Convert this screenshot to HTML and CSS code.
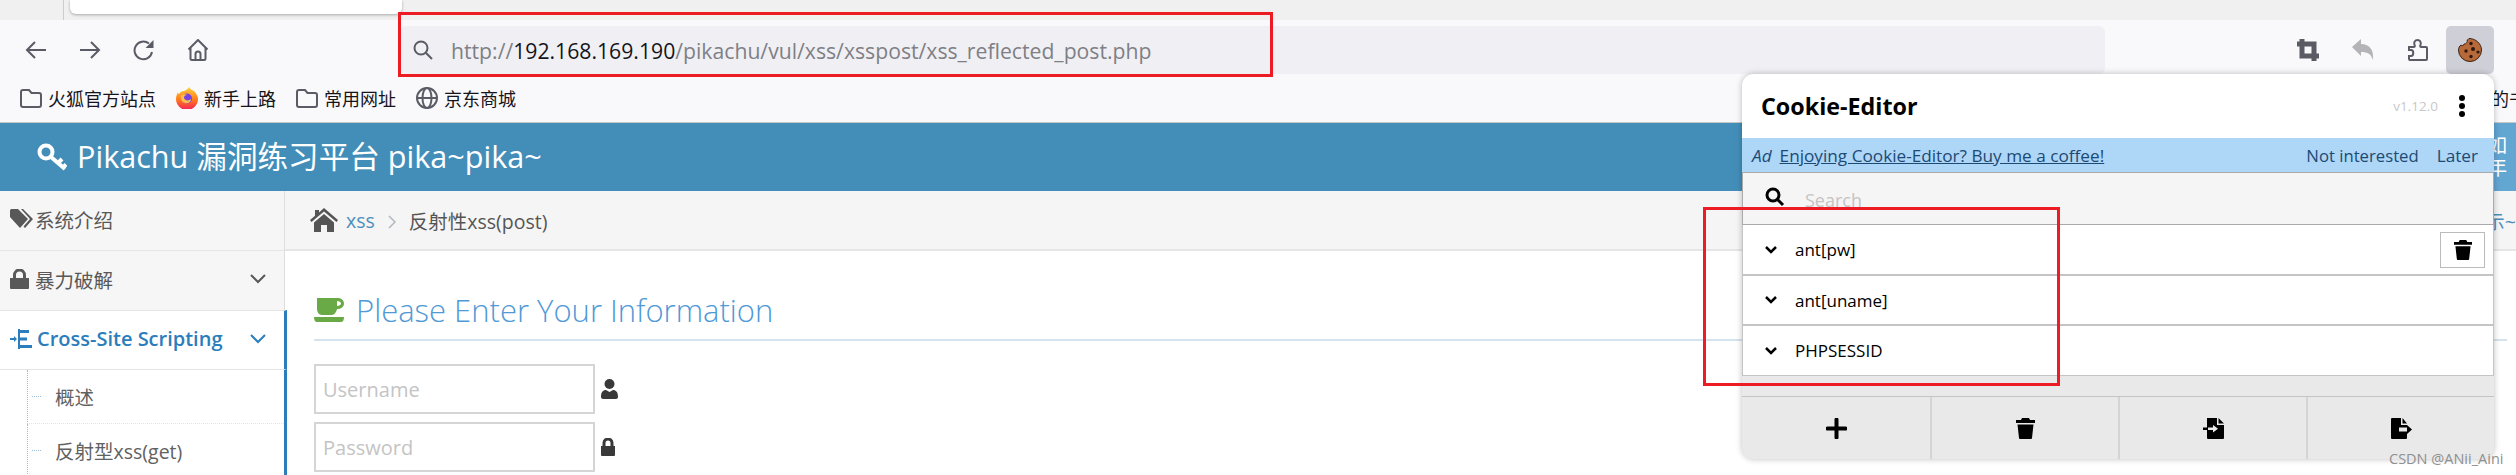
FILE: index.html
```html
<!DOCTYPE html>
<html lang="zh-CN">
<head>
    <meta charset="UTF-8">
    <title>Pikachu 漏洞练习平台</title>
    <link rel="stylesheet" href="styles.css">
</head>
<body>
    <div class="tabstrip">
        <div class="tab-line"></div>
        <div class="tab"></div>
    </div>

    <div class="toolbar">
        <div class="nav-btns">
            <svg class="tb-icon" viewBox="0 0 22 22"><path d="M21 11H2M10 3l-8 8 8 8"/></svg>
            <svg class="tb-icon" viewBox="0 0 22 22"><path d="M1 11h19M12 3l8 8-8 8"/></svg>
            <svg class="tb-icon" viewBox="0 0 22 22"><path d="M19 13a8.800 8.800 0 1 1-3-8.400"/><path class="solid" d="M20.500 1v8h-8z"/></svg>
            <svg class="tb-icon" viewBox="0 0 22 22"><path d="M1.500 10.500 11 1l9.500 9.500M3.500 9v10.500a1.500 1.500 0 0 0 1.500 1.500h12a1.500 1.500 0 0 0 1.500-1.500V9M8.500 21v-6a2.500 2.500 0 0 1 5 0v6"/></svg>
        </div>
        <div class="urlbar">
            <svg class="url-search" viewBox="0 0 20 20"><circle cx="8" cy="8" r="6.500"/><path d="M12.800 12.800 19 19"/></svg>
            <span class="url-text">http://<b>192.168.169.190</b>/pikachu/vul/xss/xsspost/xss_reflected_post.php</span>
        </div>
        <div class="tb-right">
            <svg class="tb-icon crop" viewBox="0 0 22 22"><path d="M5 0v17h17M0 5h17v17"/></svg>
            <svg class="tb-icon undo" viewBox="0 0 22 22"><path d="M0 8 9 0v5c8 0 13 5 12 16-2-6-5-8-12-8v4z"/></svg>
            <svg class="tb-icon" viewBox="0 0 22 22"><path d="M2 8h5c1 0 1-1 .500-2C6.500 3.500 8 1 10.500 1S14.500 3.500 13.500 6c-.500 1-.500 2 .500 2h5a1 1 0 0 1 1 1v11a1 1 0 0 1-1 1H3a1 1 0 0 1-1-1v-3h2c3 0 3-6 0-6H2z"/></svg>
            <div class="cookie-btn">
                <svg class="cookie" viewBox="0 0 24 24">
                    <path class="c-body" d="M11 .5C17.500 .5 23.500 5.500 23.500 12a11.500 11.500 0 0 1-23 0C.5 10 1.500 8 3 7c1 1 3 1 3-1 2 0 4-2 3-4 1 0 2-1.500 2-1.500z"/>
                    <circle cx="13" cy="5.500" r="1.700"/><circle cx="8" cy="13" r="1.700"/><circle cx="15" cy="11" r="2"/><circle cx="13" cy="18.500" r="1.700"/><circle cx="20" cy="14" r="1.600"/>
                </svg>
            </div>
        </div>
    </div>

    <div class="bookmarks">
        <svg class="bm-icon" viewBox="0 0 22 22"><path d="M3 3h6l2.500 3H19a2 2 0 0 1 2 2v10a2 2 0 0 1-2 2H3a2 2 0 0 1-2-2V5a2 2 0 0 1 2-2z"/></svg>
        <span class="bm-text">火狐官方站点</span>
        <svg class="bm-fox" viewBox="0 0 22 22">
            <defs><linearGradient id="fox" x1="0" y1="0" x2="0" y2="1"><stop offset="0" stop-color="#ffd53a"/><stop offset=".55" stop-color="#ff7a1c"/><stop offset="1" stop-color="#f5215c"/></linearGradient></defs>
            <path fill="url(#fox)" d="M13 0c1 2 3 3 5 4 3 3 4 6 4 8a11 11 0 0 1-22 0c0-3 1-5 2-7 0 1 .500 2 1 2 1-2 3-3 5-3 2-1 4-2 5-4z"/>
            <circle cx="11" cy="11.500" r="5" fill="#7542e5"/>
            <path fill="#ffbd4f" d="M5 9c2-2 5-2 6-1-2 0-3 1-3 3 1 3 5 3 7 1 0 3-3 5-6 4-3-1-5-4-4-7z"/>
        </svg>
        <span class="bm-text">新手上路</span>
        <svg class="bm-icon" viewBox="0 0 22 22"><path d="M3 3h6l2.500 3H19a2 2 0 0 1 2 2v10a2 2 0 0 1-2 2H3a2 2 0 0 1-2-2V5a2 2 0 0 1 2-2z"/></svg>
        <span class="bm-text">常用网址</span>
        <svg class="bm-icon" viewBox="0 0 22 22"><circle cx="11" cy="11" r="10"/><ellipse cx="11" cy="11" rx="4.500" ry="10"/><path d="M1 11h20"/></svg>
        <span class="bm-text">京东商城</span>
        <span class="bm-more">的书签</span>
    </div>

    <div class="navbar">
        <svg class="key" viewBox="0 0 30 28"><circle cx="9" cy="9" r="6.500"/><path d="M14 14 28 26M21 20l4-4M26 24.500l3-3"/></svg>
        <span class="brand">Pikachu 漏洞练习平台 pika~pika~</span>
        <div class="nav-user">如<br>年</div>
    </div>

    <div class="main">
        <div class="sidebar">
            <div class="side-item first">
                <svg class="side-icon tag" viewBox="0 0 24 20"><path d="M0 1.500A1.500 1.500 0 0 1 1.500 0H8l10 10-8 9L0 8z"/><path d="M11 0h2l10 10-8 9-1.500-1.500L20 10z"/></svg>
                <span>系统介绍</span>
            </div>
            <div class="side-item">
                <svg class="side-icon lock" viewBox="0 0 19 20"><path d="M0 9h19v10a1 1 0 0 1-1 1H1a1 1 0 0 1-1-1z"/><path class="arc" d="M4.500 10V6a5 5 0 0 1 10 0v4"/></svg>
                <span class="side-label">暴力破解</span>
                <svg class="chev" viewBox="0 0 16 10"><path d="M1 1l7 7 7-7"/></svg>
            </div>
            <div class="side-item active">
                <svg class="side-icon tree" viewBox="0 0 22 20"><path d="M0 9h5v2H0zM4 7l3 3-3 3zM8 0h2v20H8zM10 1h9v3h-9zM10 8.500h7v3h-7zM10 16h12v3H10z"/></svg>
                <span class="side-label">Cross-Site Scripting</span>
                <svg class="chev" viewBox="0 0 16 10"><path d="M1 1l7 7 7-7"/></svg>
            </div>
            <div class="submenu">
                <div class="sub-item"><span class="sub-tick"></span>概述</div>
                <div class="sub-item"><span class="sub-tick"></span>反射型xss(get)</div>
            </div>
        </div>

        <div class="content">
            <div class="crumbs">
                <svg class="home" viewBox="0 0 28 24"><path d="M14 0 28 12l-1.500 2L14 3.500 1.500 14 0 12 5 7.800V2h4v2.400z"/><path d="M14 6l10 8.500V24h-7v-7h-6v7H4v-9.500z"/></svg>
                <a class="crumb-link">xss</a>
                <svg class="crumb-sep" viewBox="0 0 8 14"><path d="M1 1l6 6-6 6"/></svg>
                <span class="crumb-now">反射性xss(post)</span>
                <span class="crumb-more">提示~</span>
            </div>
            <div class="form-area">
                <div class="form-head">
                    <svg class="coffee" viewBox="0 0 30 24"><path d="M3 0h20c4 0 7 2 7 5.500S27 11 23 11c-.500 3-3 6-5 6H8c-3 0-5-3-5-6z"/><path class="hole" d="M23 3v5c2 0 4-1 4-2.500S25 3 23 3z"/><path d="M0 19h30c0 3-1 5-3 5H3c-2 0-3-2-3-5z"/></svg>
                    <span>Please Enter Your Information</span>
                </div>
                <div class="field">
                    <input class="txt" type="text" placeholder="Username">
                    <svg class="f-icon" viewBox="0 0 17 20"><circle cx="8.500" cy="5" r="5"/><path d="M0 18c0-5 2-7 5-7l3.500 2 3.500-2c3 0 5 2 5 7 0 1-1 2-2 2H2c-1 0-2-1-2-2z"/></svg>
                </div>
                <div class="field">
                    <input class="txt" type="password" placeholder="Password">
                    <svg class="f-icon pw" viewBox="0 0 14 18"><path d="M0 8h14v9a1 1 0 0 1-1 1H1a1 1 0 0 1-1-1z"/><path class="arc" d="M3 9V5a4 4 0 0 1 8 0v4"/></svg>
                </div>
            </div>
        </div>
    </div>

    <!-- popup de la extension -->
    <div class="popup">
        <div class="pop-head">
            <span class="pop-title">Cookie-Editor</span>
            <span class="pop-ver">v1.12.0</span>
            <svg class="pop-dots" viewBox="0 0 6 22"><circle cx="3" cy="3" r="3"/><circle cx="3" cy="11" r="3"/><circle cx="3" cy="19" r="3"/></svg>
        </div>
        <div class="pop-ad">
            <i>Ad</i>
            <a class="ad-link">Enjoying Cookie-Editor? Buy me a coffee!</a>
            <span class="ad-no">Not interested</span>
            <span>Later</span>
        </div>
        <div class="pop-search">
            <svg class="pop-mag" viewBox="0 0 20 20"><circle cx="8" cy="8" r="6"/><path d="M12.500 12.500 18 18"/></svg>
            <span>Search</span>
        </div>
        <div class="cookie-row first">
            <svg class="row-chev" viewBox="0 0 12 8"><path d="M1 1l5 5 5-5"/></svg>
            <span>ant[pw]</span>
            <div class="row-del">
                <svg class="trash" viewBox="0 0 19 21"><path d="M6 0h7l1 2h5v3H0V2h5zM1.500 6.500h16L16 20a1 1 0 0 1-1 1H4a1 1 0 0 1-1-1z"/></svg>
            </div>
        </div>
        <div class="cookie-row">
            <svg class="row-chev" viewBox="0 0 12 8"><path d="M1 1l5 5 5-5"/></svg>
            <span>ant[uname]</span>
        </div>
        <div class="cookie-row last">
            <svg class="row-chev" viewBox="0 0 12 8"><path d="M1 1l5 5 5-5"/></svg>
            <span>PHPSESSID</span>
        </div>
        <div class="pop-foot">
            <div class="foot-btn"><svg class="foot-icon" viewBox="0 0 21 21"><path d="M8.500 1.500a2 2 0 0 1 4 0v7h7a2 2 0 0 1 0 4h-7v7a2 2 0 0 1-4 0v-7h-7a2 2 0 0 1 0-4h7z"/></svg></div>
            <div class="foot-btn"><svg class="foot-icon" viewBox="0 0 19 21"><path d="M6 0h7l1 2h5v3H0V2h5zM1.500 6.500h16L16 20a1 1 0 0 1-1 1H4a1 1 0 0 1-1-1z"/></svg></div>
            <div class="foot-btn"><svg class="foot-icon" viewBox="0 0 21 21"><path d="M4 0h10v7h7v13a1 1 0 0 1-1 1H5a1 1 0 0 1-1-1z"/><path d="M15.500 0 21 5.500h-5.500zM0 9.500h5v2.500H0z"/><path class="cut" d="M5 9.500h5V7l5 3.700-5 3.800V12H5z"/></svg></div>
            <div class="foot-btn"><svg class="foot-icon" viewBox="0 0 21 21"><path d="M0 1a1 1 0 0 1 1-1h9v7h6v13a1 1 0 0 1-1 1H1a1 1 0 0 1-1-1z"/><path d="M11.500 0 16 5.500h-4.500zM16 7l5 4.500-5 4.500z"/><path class="cut" d="M8 9.500h8v4H8z"/></svg></div>
        </div>
    </div>

    <div class="mark mark-url"></div>
    <div class="mark mark-list"></div>
    <div class="watermark">CSDN @ANii_Aini</div>
</body>
</html>
```

FILE: styles.css
```css
* {
    box-sizing: border-box;
}

html, body {
    margin: 0;
    height: 475px;
    overflow: hidden;
}

body {
    position: relative;
    background-color: #ffffff;
    font-family: "Open Sans", "Noto Sans CJK SC", sans-serif;
    color: #555555;
}

svg {
    display: block;
    flex-shrink: 0;
}

/* --- BARIS TAB --- */
.tabstrip {
    height: 20px;
    background-color: #f0f0f0;
    display: flex;
    padding-left: 63px;
}

.tab-line {
    width: 1px;
    background-color: #cccccc;
}

.tab {
    width: 332px;
    height: 14px;
    margin-left: 6px;
    background-color: #ffffff;
    border-radius: 0 0 6px 6px;
    box-shadow: 0 1px 3px rgba(0, 0, 0, 0.3);
}

/* --- TOOLBAR --- */
.toolbar {
    height: 54px;
    padding-top: 6px;
    background-color: #f9f9fb;
    display: flex;
}

.nav-btns {
    width: 400px;
    display: flex;
    align-items: center;
    gap: 32px;
    padding-left: 25px;
}

.tb-icon {
    width: 22px;
    height: 22px;
    fill: none;
    stroke: #5b5b66;
    stroke-width: 2;
}

.tb-icon .solid {
    fill: #5b5b66;
    stroke: none;
}

.urlbar {
    width: 1705px;
    height: 48px;
    background-color: #f0f0f4;
    border-radius: 6px;
    display: flex;
    align-items: center;
    padding-left: 13px;
}

.url-search {
    width: 20px;
    height: 20px;
    fill: none;
    stroke: #5b5b66;
    stroke-width: 2;
}

.url-text {
    margin-left: 18px;
    font-size: 21.200px;
    color: #7f7f86;
    white-space: nowrap;
}

.url-text b {
    font-weight: 400;
    color: #15141a;
}

.tb-right {
    flex: 1;
    display: flex;
    align-items: center;
    padding-left: 192px;
    gap: 33px;
    height: 48px;
}

.tb-icon.crop {
    stroke-width: 5;
}

.tb-icon.undo {
    fill: #b4b4b8;
    stroke: none;
}

.cookie-btn {
    width: 48px;
    height: 48px;
    margin-left: -16px;
    flex-shrink: 0;
    background-color: #cfcfd8;
    border-radius: 5px;
    display: flex;
    align-items: center;
    justify-content: center;
}

.cookie {
    width: 24px;
    height: 24px;
    fill: #2b1a10;
}

.c-body {
    fill: #b8693a;
    stroke: #3a2414;
    stroke-width: 1;
}

/* --- BOOKMARK --- */
.bookmarks {
    height: 49px;
    background-color: #f9f9fb;
    border-bottom: 1px solid #c8c8c8;
    display: flex;
    align-items: center;
    padding-left: 20px;
    font-family: "Noto Sans CJK SC", sans-serif;
    font-size: 18px;
    color: #15141a;
}

.bm-icon {
    width: 22px;
    height: 22px;
    fill: none;
    stroke: #5b5b66;
    stroke-width: 2;
}

.bm-fox {
    width: 22px;
    height: 22px;
}

.bm-text {
    margin-left: 6px;
    margin-right: 20px;
}

.bm-more {
    margin-left: auto;
    width: 25px;
    overflow: hidden;
    white-space: nowrap;
}

/* --- HEADER BIRU --- */
.navbar {
    height: 68px;
    background-color: #438eb9;
    display: flex;
    align-items: center;
    padding-left: 37px;
    color: #ffffff;
}

.key {
    width: 30px;
    height: 28px;
    fill: none;
    stroke: #ffffff;
    stroke-width: 4;
}

.brand {
    margin: 0 0 5px 10px;
    font-size: 30.600px;
    white-space: nowrap;
}

.nav-user {
    margin-left: auto;
    width: 40px;
    height: 68px;
    padding: 12px 9px 0 0;
    background-color: #62a6d2;
    text-align: right;
    font-size: 20px;
    line-height: 22px;
}

/* --- ISI HALAMAN --- */
.main {
    display: flex;
    height: 284px;
}

.sidebar {
    width: 285px;
    flex-shrink: 0;
    background-color: #f6f6f6;
    border-right: 1px solid #dddddd;
    position: relative;
}

.side-item {
    height: 60px;
    display: flex;
    align-items: center;
    padding: 0 18px 3px 10px;
    font-size: 19.500px;
    color: #585858;
    border-top: 1px solid #e5e5e5;
}

.side-item.first {
    height: 59px;
    border-top: none;
}

.side-label {
    flex: 1;
    margin-left: 6px;
}

.side-icon {
    fill: #585858;
}

.tag {
    width: 24px;
    height: 20px;
    margin-right: 1px;
}

.lock {
    width: 19px;
    height: 20px;
}

.arc {
    fill: none;
    stroke: #585858;
    stroke-width: 3;
}

.chev {
    width: 16px;
    height: 10px;
    fill: none;
    stroke: #585858;
    stroke-width: 2;
}

.side-item.active {
    height: 60px;
    margin-right: -3px;
    border-right: 3px solid #2b7dbc;
    background-color: #ffffff;
    color: #2b7dbc;
    font-size: 20px;
    font-weight: 600;
    border-bottom: 1px solid #e5e5e5;
}

.active .chev {
    stroke: #2b7dbc;
}

.active .side-label {
    margin-left: 5px;
}

.tree {
    width: 22px;
    height: 20px;
    fill: #2b7dbc;
}

.submenu {
    background-color: #ffffff;
    margin-right: -3px;
    border-right: 3px solid #2b7dbc;
    height: 106px;
}

.sub-item {
    height: 54px;
    display: flex;
    align-items: center;
    margin-left: 27px;
    border-left: 1px dotted #9dbdd6;
    border-bottom: 1px dotted #e4e4e4;
    font-size: 19.500px;
    color: #616161;
}

.sub-tick {
    width: 9px;
    border-top: 1px dotted #9dbdd6;
    margin: 0 14px 0 4px;
}

.content {
    flex: 1;
    min-width: 0;
}

.crumbs {
    height: 60px;
    background-color: #f5f5f5;
    border-bottom: 2px solid #e5e5e5;
    display: flex;
    align-items: center;
    padding-left: 25px;
    font-size: 19.500px;
}

.home {
    width: 28px;
    height: 24px;
    fill: #555555;
}

.crumb-link {
    margin-left: 8px;
    color: #4c8fbd;
}

.crumb-sep {
    width: 8px;
    height: 14px;
    margin: 3px 13px 0;
    fill: none;
    stroke: #b2b6bf;
    stroke-width: 1.500;
}

.crumb-now {
    color: #555555;
}

.crumb-more {
    margin-left: auto;
    color: #4c8fbd;
    white-space: nowrap;
}

.form-area {
    padding: 44px 9px 0 30px;
}

.form-head {
    display: flex;
    align-items: center;
    gap: 12px;
    height: 46px;
    margin-left: -1px;
    border-bottom: 2px solid #d5e3ef;
    padding-bottom: 14px;
    font-size: 31px;
    font-weight: 300;
    color: #4f99d6;
    white-space: nowrap;
}

.coffee {
    width: 30px;
    height: 24px;
    fill: #69aa46;
}

.coffee .hole {
    fill: #ffffff;
}

.field {
    display: flex;
    align-items: center;
    gap: 6px;
    margin-top: 8px;
    margin-left: -1px;
}

.form-head + .field {
    margin-top: 23px;
}

.txt {
    width: 281px;
    height: 50px;
    padding: 0 7px;
    border: 2px solid #d5d5d5;
    background-color: #ffffff;
    font-family: inherit;
    font-size: 20px;
    outline: none;
}

.txt::placeholder {
    color: #c4c4c4;
}

.f-icon {
    width: 17px;
    height: 20px;
    fill: #393939;
}

.f-icon.pw {
    width: 14px;
    height: 18px;
}

.f-icon .arc {
    stroke: #393939;
}

/* --- POPUP COOKIE EDITOR --- */
.popup {
    position: absolute;
    left: 1742px;
    top: 74px;
    width: 752px;
    height: 385px;
    background-color: #e9e9e9;
    border-radius: 12px;
    box-shadow: 0 0 6px rgba(0, 0, 0, 0.25);
    overflow: hidden;
    color: #000000;
    display: flex;
    flex-direction: column;
}

.pop-head {
    height: 64px;
    flex-shrink: 0;
    background-color: #ffffff;
    display: flex;
    align-items: center;
    padding: 0 28px 0 19px;
}

.pop-title {
    flex: 1;
    font-size: 23.300px;
    font-weight: 700;
}

.pop-ver {
    font-size: 13.500px;
    color: #c8c8c8;
    margin-right: 20px;
}

.pop-dots {
    width: 8px;
    height: 22px;
}

.pop-ad {
    height: 34px;
    flex-shrink: 0;
    background-color: #aed6f6;
    display: flex;
    align-items: center;
    gap: 8px;
    padding: 0 16px 0 10px;
    font-size: 17.200px;
    color: #1c4a75;
}

.ad-link {
    flex: 1;
    text-decoration: underline;
}

.ad-no {
    margin-right: 10px;
    font-size: 16.700px;
}

.pop-search {
    height: 53px;
    flex-shrink: 0;
    background-color: #f5f5f5;
    border: 1px solid #aaaaaa;
    display: flex;
    padding-left: 22px;
    font-size: 18px;
    color: #c4c4c4;
}

.pop-search span {
    margin: 15px 0 0 20px;
}

.pop-mag {
    width: 20px;
    height: 20px;
    margin-top: 14px;
    fill: none;
    stroke: #000000;
    stroke-width: 3;
}

.cookie-row {
    height: 50px;
    flex-shrink: 0;
    background-color: #ffffff;
    border: 1px solid #c4c4c4;
    border-top: none;
    border-bottom-width: 2px;
    display: flex;
    align-items: center;
    padding: 0 8px 0 22px;
    font-size: 17px;
}

.cookie-row.first {
    height: 51px;
}

.cookie-row.last {
    border-bottom-width: 1px;
}

.row-chev {
    width: 12px;
    height: 8px;
    margin-right: 18px;
    fill: none;
    stroke: #000000;
    stroke-width: 2.500;
}

.row-del {
    margin-left: auto;
    width: 45px;
    height: 36px;
    border: 1px solid #bbbbbb;
    display: flex;
    align-items: center;
    justify-content: center;
}

.trash {
    width: 18px;
    height: 20px;
}

.pop-foot {
    margin-top: auto;
    height: 63px;
    border-top: 1px solid #c4c4c4;
    display: grid;
    grid-template-columns: repeat(4, 1fr);
}

.foot-btn {
    display: flex;
    align-items: center;
    justify-content: center;
    border-left: 2px solid #d4d4d4;
}

.foot-btn:first-child {
    border-left: none;
}

.foot-icon {
    height: 21px;
    width: 21px;
}

.foot-icon .cut {
    fill: #e9e9e9;
}

/* --- KOTAK MERAH --- */
.mark {
    position: absolute;
    border: 3px solid #ed1c24;
}

.mark-url {
    left: 398px;
    top: 12px;
    width: 875px;
    height: 65px;
}

.mark-list {
    left: 1703px;
    top: 207px;
    width: 357px;
    height: 179px;
}

.watermark {
    position: absolute;
    left: 2389px;
    top: 449px;
    font-size: 14.500px;
    color: #8f8f8f;
    white-space: nowrap;
}
```
